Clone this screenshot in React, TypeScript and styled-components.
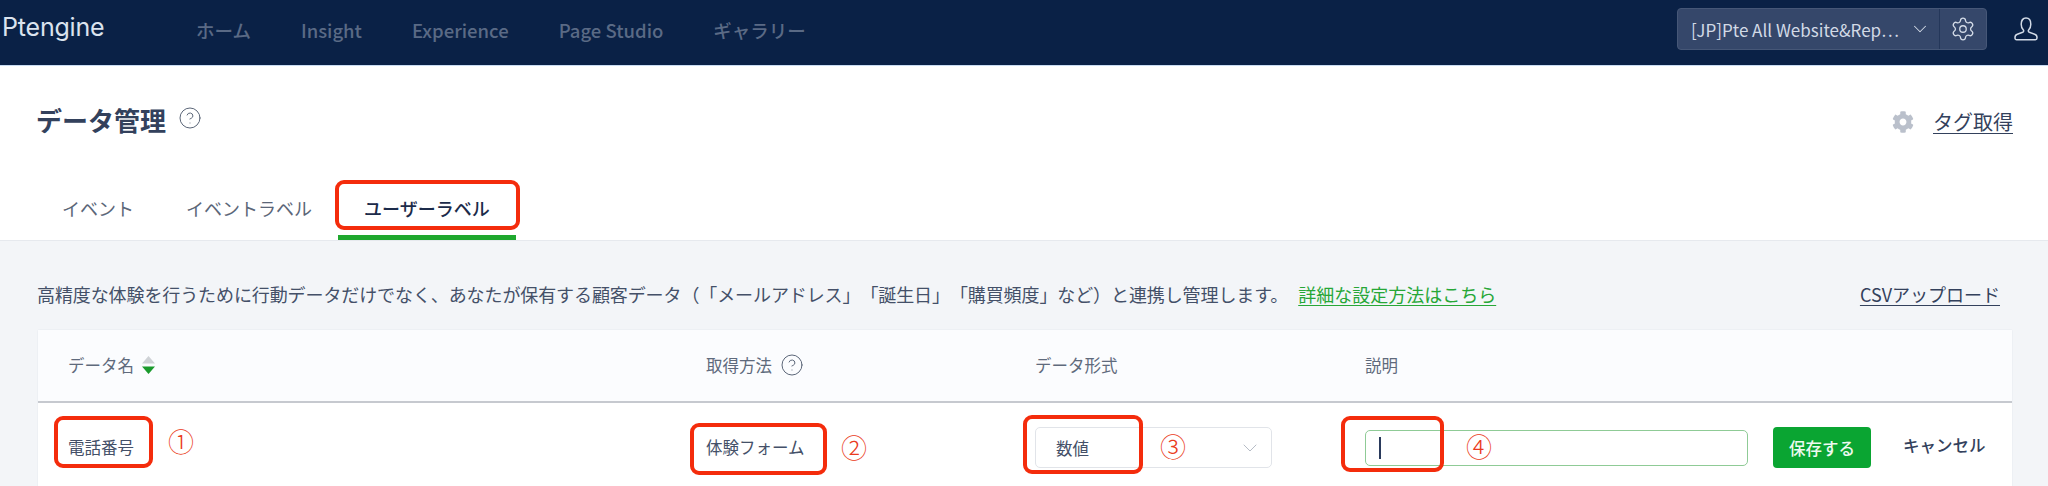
import React from 'react';
import styled, { createGlobalStyle } from 'styled-components';
import { ChevronDown, CircleHelp, Settings } from 'lucide-react';
import { FaCog } from 'react-icons/fa';

const GlobalStyle = createGlobalStyle`
    html, body {
        margin: 0;
        padding: 0;
        background: #f3f5f8;
        overflow: hidden;
    }
    body {
        font-family: "Noto Sans CJK JP", "Noto Sans", sans-serif;
        color: #33415c;
        text-spacing-trim: space-all;
    }
`;

const Page = styled.div`
    width: 2048px;
    height: 486px;
    overflow: hidden;
    position: relative;
`;

const TopBar = styled.header`
    height: 65px;
    box-sizing: content-box;
    background: #0a2146;
    border-bottom: 1px solid #c9dcf2;
    display: flex;
    align-items: center;
    padding: 0 9px 0 2px;
`;

const Logo = styled.div`
    width: 194px;
    font-family: "Inter", sans-serif;
    font-size: 25px;
    font-weight: 400;
    letter-spacing: -0.2px;
    line-height: 1;
    color: #dbe3ee;
    margin-top: -11px;
`;

const Nav = styled.nav`
    display: flex;
    gap: 50px;
    flex: 1;
    margin-top: -5px;
`;

const NavItem = styled.a`
    font-size: 18.5px;
    font-weight: 500;
    color: #5a6a85;
    line-height: 24px;
`;

const SiteSwitch = styled.div`
    width: 310px;
    height: 42px;
    box-sizing: border-box;
    display: flex;
    margin-top: -7px;
    background: #35476a;
    border: 1px solid #465777;
    border-radius: 4px;
    color: #d2dae6;
`;

const SiteName = styled.div`
    flex: 1;
    display: flex;
    align-items: center;
    justify-content: space-between;
    padding: 0 8px 0 13px;
    font-size: 17px;
    white-space: nowrap;
    border-right: 1px solid #24375a;
`;

const GearBox = styled.div`
    width: 46px;
    display: flex;
    align-items: center;
    justify-content: center;
`;

const UserButton = styled.div`
    width: 26px;
    height: 26px;
    margin-left: 26px;
    margin-top: -7px;
    color: #d2dae6;
`;

const TitleArea = styled.section`
    background: #fff;
    height: 175px;
    box-sizing: border-box;
    border-bottom: 1px solid #e6e9ee;
    padding: 39px 35px 0 36px;
    display: flex;
    flex-direction: column;
`;

const TitleRow = styled.div`
    display: flex;
    align-items: center;
    justify-content: space-between;
    height: 30px;
`;

const TitleLeft = styled.div`
    display: flex;
    align-items: center;
    gap: 12px;
`;

const Title = styled.h1`
    margin: 0;
    font-size: 26px;
    font-weight: 700;
    line-height: 30px;
    color: #33415c;
`;

const HelpMark = styled(CircleHelp)`
    stroke-width: 1;
    color: #5b6678;
    flex: none;
`;

const TitleHelp = styled(HelpMark)`
    margin-top: -4px;
`;

const TagLink = styled.a`
    display: flex;
    align-items: center;
    gap: 19px;
    margin-top: 4px;
    font-size: 20px;
    line-height: 26px;
    color: #33415c;
    span {
        text-decoration: underline;
        text-underline-offset: 3px;
        text-decoration-thickness: 1px;
    }
    svg {
        color: #bac0cb;
    }
`;

const Tabs = styled.div`
    display: flex;
    margin-top: 43px;
    margin-left: -36px;
    padding-left: 62px;
    flex: 1;
    align-items: stretch;
    gap: 52px;
`;

const Tab = styled.div<{ $active?: boolean }>`
    position: relative;
    font-size: 18px;
    line-height: 26px;
    padding-top: 17px;
    color: ${props => (props.$active ? '#1c2b4a' : '#5b6678')};
    font-weight: ${props => (props.$active ? 500 : 400)};
    ${props => props.$active && `
        &::after {
            content: "";
            position: absolute;
            left: -26px;
            right: -26px;
            bottom: 0;
            height: 5px;
            background: #1fa82e;
        }
    `}
`;

const Content = styled.main`
    padding: 0 35px 0 37px;
`;

const InfoRow = styled.div`
    height: 88px;
    box-sizing: border-box;
    padding-top: 40px;
    display: flex;
    justify-content: space-between;
    font-size: 18px;
    line-height: 26px;
    color: #445068;
    white-space: nowrap;
`;

const InfoText = styled.div`
    letter-spacing: -0.1px;
`;

const GreenLink = styled.a`
    color: #27a737;
    margin-left: 10px;
    letter-spacing: 0;
    text-decoration: underline;
    text-underline-offset: 3px;
`;

const CsvLink = styled.a`
    color: #33415c;
    font-size: 18px;
    margin-right: 13px;
    text-decoration: underline;
    text-underline-offset: 3px;
`;

const Table = styled.div`
    border: 1px solid #edf0f4;
    border-bottom: none;
    border-radius: 3px 3px 0 0;
    background: #fff;
`;

const columns = '638px 329px 330px 1fr';

const HeadRow = styled.div`
    height: 73px;
    box-sizing: border-box;
    background: #fbfcfe;
    border-bottom: 2px solid #c6c9cf;
    display: grid;
    grid-template-columns: ${columns};
    padding-left: 30px;
    align-items: center;
`;

const HeadCell = styled.div`
    display: flex;
    align-items: center;
    gap: 8px;
    margin-top: -2px;
    font-size: 16.5px;
    line-height: 24px;
    color: #5f6a7c;
`;

const BodyRow = styled.div`
    height: 90px;
    display: grid;
    grid-template-columns: ${columns};
    padding-left: 30px;
    align-items: start;
`;

const BodyCell = styled.div`
    position: relative;
    padding-top: 31px;
    font-size: 16.5px;
    line-height: 26px;
    color: #445068;
`;

const PlainText = styled.div`
    white-space: nowrap;
`;

const SelectBox = styled.div`
    width: 237px;
    height: 41px;
    box-sizing: border-box;
    margin-top: -7px;
    padding: 0 9px 0 20px;
    display: flex;
    align-items: center;
    justify-content: space-between;
    background: #fff;
    border: 1px solid #e1e4e9;
    border-radius: 5px;
    svg {
        color: #b6bcc6;
    }
`;

const ActionCell = styled(BodyCell)`
    display: flex;
    align-items: flex-start;
`;

const TextField = styled.div`
    width: 383px;
    height: 36px;
    box-sizing: border-box;
    margin-top: -4px;
    padding-left: 13px;
    display: flex;
    align-items: center;
    background: #fff;
    border: 1px solid #8fcb96;
    border-radius: 5px;
`;

const Caret = styled.i`
    display: block;
    width: 2px;
    height: 22px;
    background: #2a3a5c;
`;

const SaveButton = styled.button`
    width: 98px;
    height: 41px;
    margin: -7px 0 0 25px;
    border: none;
    border-radius: 4px;
    background: #0aa532;
    color: #eefaf0;
    font-family: inherit;
    font-size: 16.5px;
    font-weight: 500;
    padding: 0;
`;

const CancelButton = styled.a`
    margin: -2px 0 0 32px;
    font-size: 16.5px;
    font-weight: 500;
    white-space: nowrap;
    color: #33415c;
`;

/* red marks drawn over the screenshot */
const Highlight = styled.div<{ $x: number; $y: number; $w: number; $h: number }>`
    position: absolute;
    left: ${props => props.$x}px;
    top: ${props => props.$y}px;
    width: ${props => props.$w}px;
    height: ${props => props.$h}px;
    box-sizing: border-box;
    border: 4px solid #f42c0c;
    border-radius: 9px;
    pointer-events: none;
`;

const Marker = styled.span<{ $x: number; $y: number }>`
    position: absolute;
    left: ${props => props.$x}px;
    top: ${props => props.$y}px;
    font-size: 26px;
    font-weight: 300;
    line-height: 30px;
    color: #ea3a20;
`;

function UserIcon() {
    return (
        <svg width="26" height="26" viewBox="0 0 26 26" fill="none" stroke="currentColor" strokeWidth="1.5" strokeLinejoin="round">
            <path d="M8.200 8.200C8.200 4.400 10.200 2 13 2s4.800 2.400 4.800 6.200c0 2.500-.9 4.300-2 5.500-.8.900-.6 2 .5 2.500l5.400 2.100c1.400.5 2.300 1.500 2.300 3.200v.6c0 1-.6 1.600-1.600 1.600H3.600c-1 0-1.600-.6-1.600-1.600v-.6c0-1.700.9-2.700 2.300-3.200l5.400-2.100c1.100-.5 1.300-1.600.5-2.500-1.100-1.200-2-3-2-5.500z" />
        </svg>
    );
}

function SortArrows() {
    return (
        <svg width="13" height="18" viewBox="0 0 13 18">
            <path d="M6.500 0 13 7.500H0z" fill="#cfd2d6" />
            <path d="M0 10.500h13L6.500 18z" fill="#1a9a2c" />
        </svg>
    );
}

export default function App() {
    const navItems = ['ホーム', 'Insight', 'Experience', 'Page Studio', 'ギャラリー'];
    return (
        <Page>
            <GlobalStyle />
            <TopBar>
                <Logo>Ptengine</Logo>
                <Nav>
                    {navItems.map(item => <NavItem key={item}>{item}</NavItem>)}
                </Nav>
                <SiteSwitch>
                    <SiteName>
                        [JP]Pte All Website&amp;Rep⋯
                        <ChevronDown size={22} strokeWidth={1.1} />
                    </SiteName>
                    <GearBox><Settings size={26} strokeWidth={1.2} /></GearBox>
                </SiteSwitch>
                <UserButton><UserIcon /></UserButton>
            </TopBar>
            <TitleArea>
                <TitleRow>
                    <TitleLeft>
                        <Title>データ管理</Title>
                        <TitleHelp size={24} />
                    </TitleLeft>
                    <TagLink>
                        <FaCog size={22} />
                        <span>タグ取得</span>
                    </TagLink>
                </TitleRow>
                <Tabs>
                    <Tab>イベント</Tab>
                    <Tab>イベントラベル</Tab>
                    <Tab $active>ユーザーラベル</Tab>
                </Tabs>
            </TitleArea>
            <Content>
                <InfoRow>
                    <InfoText>
                        高精度な体験を行うために行動データだけでなく、あなたが保有する顧客データ（「メールアドレス」「誕生日」「購買頻度」など）と連携し管理します。
                        <GreenLink>詳細な設定方法はこちら</GreenLink>
                    </InfoText>
                    <CsvLink>CSVアップロード</CsvLink>
                </InfoRow>
                <Table>
                    <HeadRow>
                        <HeadCell>データ名 <SortArrows /></HeadCell>
                        <HeadCell>取得方法 <HelpMark size={24} /></HeadCell>
                        <HeadCell>データ形式</HeadCell>
                        <HeadCell>説明</HeadCell>
                    </HeadRow>
                    <BodyRow>
                        <BodyCell><PlainText>電話番号</PlainText></BodyCell>
                        <BodyCell><PlainText>体験フォーム</PlainText></BodyCell>
                        <BodyCell>
                            <SelectBox>
                                数値
                                <ChevronDown size={24} strokeWidth={1} />
                            </SelectBox>
                        </BodyCell>
                        <ActionCell>
                            <TextField><Caret /></TextField>
                            <SaveButton>保存する</SaveButton>
                            <CancelButton>キャンセル</CancelButton>
                        </ActionCell>
                    </BodyRow>
                </Table>
            </Content>
            <Highlight $x={335} $y={180} $w={185} $h={50} />
            <Highlight $x={54} $y={416} $w={99} $h={52} />
            <Highlight $x={690} $y={423} $w={137} $h={52} />
            <Highlight $x={1023} $y={415} $w={120} $h={59} />
            <Highlight $x={1341} $y={416} $w={103} $h={56} />
            <Marker $x={168} $y={426}>①</Marker>
            <Marker $x={841} $y={432}>②</Marker>
            <Marker $x={1160} $y={431}>③</Marker>
            <Marker $x={1466} $y={431}>④</Marker>
        </Page>
    );
}
